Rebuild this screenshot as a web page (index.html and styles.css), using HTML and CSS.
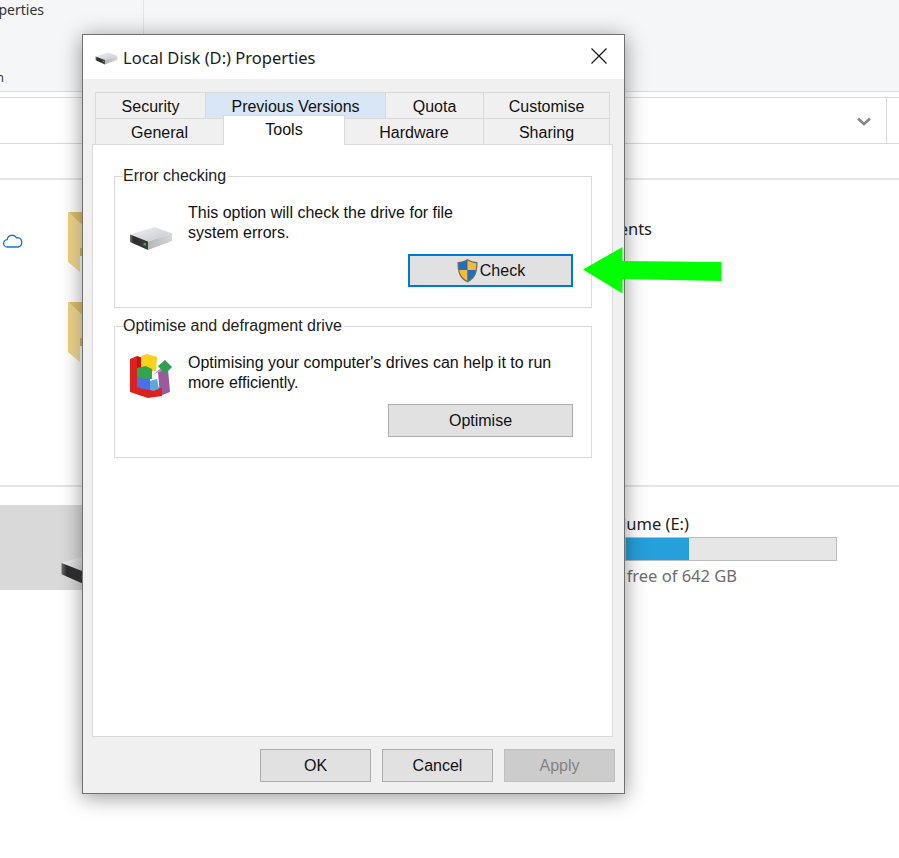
FILE: index.html
```html
<!DOCTYPE html>
<html lang="en">
<head>
<meta charset="utf-8">
<title>Local Disk (D:) Properties</title>
<link rel="stylesheet" href="styles.css">
</head>
<body>
<svg class="defs" width="0" height="0" aria-hidden="true">
  <defs>
    <linearGradient id="driveTop" x1="0" y1="0" x2="1" y2="1">
      <stop offset="0" stop-color="#f2f2f4"/><stop offset="1" stop-color="#c4c6ca"/>
    </linearGradient>
    <linearGradient id="driveFront" x1="0" y1="0" x2="1" y2="0">
      <stop offset="0" stop-color="#6e6e6e"/><stop offset=".2" stop-color="#2c2c2c"/><stop offset="1" stop-color="#3c3c3c"/>
    </linearGradient>
    <linearGradient id="driveSide" x1="0" y1="0" x2="1" y2="0">
      <stop offset="0" stop-color="#b5b6ba"/><stop offset="1" stop-color="#d5d6d9"/>
    </linearGradient>
    <linearGradient id="folderFace" x1="0" y1="0" x2="1" y2="0">
      <stop offset="0" stop-color="#eed180"/><stop offset="1" stop-color="#f8e4a4"/>
    </linearGradient>
    <symbol id="drive" viewBox="0 0 44 25">
      <polygon points="1,8.5 26,1 43,7.5 19,15.5" fill="url(#driveTop)"/>
      <polygon points="1,8.5 19,15.5 19,24 1,16" fill="url(#driveFront)"/>
      <polygon points="19,15.5 43,7.5 43,15 19,24" fill="url(#driveSide)"/>
      <rect x="14.5" y="17" width="2.5" height="2.5" fill="#22c03a"/>
    </symbol>
    <symbol id="folder" viewBox="0 0 14 60">
      <polygon points="0,0 14,0 14,13" fill="#e2c268"/>
      <polygon points="0,0 14,13 14,44 12,44 12,60 0,50" fill="url(#folderFace)"/>
      <rect x="12" y="36" width="2" height="8" fill="#d9b860"/>
    </symbol>
  </defs>
</svg>

<div class="explorer">
  <header class="ribbon">
    <div class="ribbon-group">
      <div class="ribbon-label">Properties</div>
      <div class="ribbon-caption">Open</div>
    </div>
  </header>
  <div class="address">
    <div class="address-field">
      <svg class="chevron" width="14" height="9" viewBox="0 0 14 9"><path d="M1 1.5 7 7l6-5.500" fill="none" stroke="#858585" stroke-width="2.400"/></svg>
    </div>
    <div class="address-end"></div>
  </div>
  <div class="section-head"></div>
  <section class="folders">
    <div class="quick-col">
      <svg class="cloud" width="20" height="15" viewBox="0 0 20 15"><path d="M5 14H4.500a3.700 3.700 0 0 1-.3-7.400A5 5 0 0 1 13.500 4.800a4.500 4.500 0 0 1 .9-.1 4.700 4.700 0 0 1 .6 9.300Z" fill="none" stroke="#0a78d6" stroke-width="1.300"/></svg>
    </div>
    <div class="folder-col">
      <svg class="folder" width="14" height="60"><use href="#folder"/></svg>
      <svg class="folder" width="14" height="60"><use href="#folder"/></svg>
    </div>
    <div class="docs-col">Documents</div>
  </section>
  <div class="section-rule"></div>
  <section class="drives">
    <div class="drive-selected">
      <svg class="drive-large" width="66" height="38"><use href="#drive"/></svg>
    </div>
    <div class="volume">
      <div class="volume-name">New Volume (E:)</div>
      <div class="meter"><div class="meter-fill" style="width:30%"></div></div>
      <div class="volume-free">400 GB free of 642 GB</div>
    </div>
  </section>
</div>

<div class="dialog">
  <div class="titlebar">
    <svg class="title-icon" width="23" height="13"><use href="#drive"/></svg>
    <span class="title-text">Local Disk (D:) Properties</span>
    <svg class="close" width="16" height="16" viewBox="0 0 16 16"><path d="M.5.5l15 15M15.500.5l-15 15" stroke="#111" stroke-width="1.100" fill="none"/></svg>
  </div>
  <div class="dialog-body">
    <div class="tabs">
      <div class="tab-row">
        <div class="tab w-security">Security</div>
        <div class="tab w-previous hot">Previous Versions</div>
        <div class="tab w-quota">Quota</div>
        <div class="tab w-customise">Customise</div>
      </div>
      <div class="tab-row">
        <div class="tab w-general">General</div>
        <div class="tab w-tools active">Tools</div>
        <div class="tab w-hardware">Hardware</div>
        <div class="tab w-sharing">Sharing</div>
      </div>
    </div>
    <div class="panel">
      <div class="group first">
        <span class="legend">Error checking</span>
        <div class="group-row">
          <svg class="group-drive" width="44" height="25"><use href="#drive"/></svg>
          <p class="group-text">This option will check the drive for file<br>system errors.</p>
        </div>
        <div class="group-actions">
          <button class="btn focus" type="button">
            <svg class="shield" width="23" height="25" viewBox="0 0 23 25">
              <path d="M11.500 1C8.500 3 5 4 1.500 4c0 9 1 16 10 20.500C20.500 20 21.500 13 21.500 4 18 4 14.500 3 11.500 1Z" fill="#6e6e6e"/>
              <path d="M11.500 2.500C9 4 6 5 2.800 5.200c0 2.300.1 4.600.5 6.800h8.200Z" fill="#1b6fc4"/>
              <path d="M11.500 2.500C14 4 17 5 20.200 5.200c0 2.300-.1 4.600-.5 6.800h-8.200Z" fill="#fbb92f"/>
              <path d="M3.300 12h8.200v10.900C6 19.800 4.100 16.500 3.300 12Z" fill="#fbb92f"/>
              <path d="M19.700 12h-8.200v10.900c5.500-3.100 7.400-6.400 8.200-10.900Z" fill="#1b6fc4"/>
            </svg><span>Check</span>
          </button>
        </div>
      </div>
      <div class="group">
        <span class="legend">Optimise and defragment drive</span>
        <div class="group-row">
          <svg class="defrag" width="44" height="46" viewBox="129 353 44 46">
            <polygon points="158,372 168,369 170,392 160,396" fill="#9c5a9e"/>
            <polygon points="153,375 158,372 168,369 162,367" fill="#b985b9"/>
            <polygon points="130,359 137,356 142,358 142,386 162,388 162,396 148,398 130,392" fill="#e0201c"/>
            <polygon points="137,356 142,358 142,386 140,386 137,384" fill="#c81410"/>
            <polygon points="141,356 147,354 157,357 156,371 147,372 141,370" fill="#f6d21a"/>
            <polygon points="137,368 146,366 152,369 152,379 143,380 137,377" fill="#2fa84c"/>
            <polygon points="137,376 143,379 150,378 150,390 143,389 137,387" fill="#4a6fe8"/>
            <polygon points="150,381 157,379 159,389 153,391 150,390" fill="#5aa8dc"/>
            <polygon points="158,366 165,360 172,367 165,374" fill="#2f9e52"/>
          </svg>
          <p class="group-text">Optimising your computer's drives can help it to run<br>more efficiently.</p>
        </div>
        <div class="group-actions">
          <button class="btn wide" type="button">Optimise</button>
        </div>
      </div>
    </div>
    <div class="footer">
      <button class="btn small" type="button">OK</button>
      <button class="btn small" type="button">Cancel</button>
      <button class="btn small disabled" type="button">Apply</button>
    </div>
  </div>
</div>

<svg class="arrow" width="140" height="48" viewBox="583 247 140 48"><polygon points="583,269.500 622.500,247 622.500,261 721.500,262 721.500,281 622.500,279 622.500,293.500" fill="#00ff00"/></svg>
</body>
</html>
```
FILE: styles.css
```css
* { box-sizing: border-box; }
html, body { margin: 0; padding: 0; background: #fff; }
body {
  width: 899px;
  height: 858px;
  position: relative;
  overflow: hidden;
  font-family: "Liberation Sans", Arial, sans-serif;
  font-size: 16px;
  color: #111;
}
.defs { position: absolute; }

/* Explorer behind the dialog */
.explorer { height: 858px; font-family: "Noto Sans", "Open Sans", sans-serif; }
.ribbon {
  height: 92px;
  background: #f5f6f8;
  border-bottom: 1px solid #dcdcdc;
  display: flex;
}
.ribbon-group {
  width: 144px;
  border-right: 1px solid #e3e4e6;
  font-size: 14px;
  color: #333;
  position: relative;
  overflow: hidden;
}
.ribbon-label {
  height: 69px;
  width: 44px;
  display: flex;
  justify-content: flex-end;
  white-space: nowrap;
  padding-top: 0;
  line-height: 20px;
}
.ribbon-caption {
  width: 4px;
  display: flex;
  justify-content: flex-end;
  font-size: 12px;
  line-height: 18px;
}
.address {
  margin-top: 5px;
  height: 47px;
  border-top: 1px solid #dcdcdc;
  border-bottom: 1px solid #d9d9d9;
  display: flex;
}
.address-field {
  width: 887px;
  border-right: 1px solid #d9d9d9;
  display: flex;
  align-items: center;
  justify-content: flex-end;
  padding-right: 15px;
}
.chevron { margin-top: 2px; }
.address-end { flex: 1; }
.section-head {
  height: 36px;
  border-bottom: 2px solid #e5e5e5;
}
.folders {
  height: 305px;
  display: flex;
}
.quick-col { width: 68px; padding: 53px 0 0 3px; }
.cloud { display: block; }
.folder-col {
  width: 14px;
  padding-top: 32px;
  display: flex;
  flex-direction: column;
  gap: 30px;
}
.folder { display: block; }
.docs-col {
  margin-left: 480px;
  width: 90px;
  display: flex;
  justify-content: flex-end;
  padding-top: 37px;
  font-size: 16.500px;
  line-height: 24px;
  color: #222;
  white-space: nowrap;
}
.section-rule { height: 2px; background: #e5e5e5; }
.drives {
  display: flex;
  padding-top: 18px;
}
.drive-selected {
  width: 82px;
  height: 85px;
  background: #d9d9d9;
  position: relative;
  overflow: hidden;
  padding: 45px 0 0 60px;
}
.drive-large { display: block; flex: none; }
.volume {
  margin-left: 543px;
  width: 212px;
  position: relative;
}
.volume-name, .volume-free {
  display: flex;
  justify-content: flex-start;
  white-space: nowrap;
  direction: rtl;
  width: 64px;
  font-size: 16.500px;
  line-height: 24px;
  color: #222;
  unicode-bidi: plaintext;
}
.volume-name { margin-top: 7px; height: 24px; direction: ltr; justify-content: flex-end; }
.volume-free { margin-top: 3px; width: 112px; color: #6d6d6d; direction: ltr; justify-content: flex-end; }
.meter {
  margin-top: 1px;
  height: 24px;
  background: #e6e6e6;
  border: 1px solid #bcbcbc;
  display: flex;
}
.meter-fill { background: #26a0da; }

/* Dialog */
.dialog {
  position: absolute;
  left: 82px;
  top: 34px;
  width: 543px;
  height: 760px;
  background: #f0f0f0;
  border: 1px solid #707070;
  box-shadow: 0 3px 20px rgba(0, 0, 0, .42);
  display: flex;
  flex-direction: column;
}
.titlebar {
  height: 44px;
  flex: none;
  background: #fff;
  display: flex;
  align-items: center;
  padding: 0 17px 0 12px;
}
.title-icon { margin-top: 3px; }
.title-text {
  margin-left: 5px;
  flex: 1;
  font-family: "Noto Sans", "Open Sans", sans-serif;
  font-size: 16.500px;
  color: #1a1a1a;
}
.close { margin-top: -2px; }
.dialog-body {
  flex: 1;
  display: flex;
  flex-direction: column;
  padding-top: 13px;
}
.tabs { margin-left: 12px; }
.tab-row { display: flex; height: 26px; }
.tab {
  border: 1px solid #d9d9d9;
  border-right-width: 0;
  border-bottom-width: 0;
  background: #f0f0f0;
  text-align: center;
  line-height: 28px;
  height: 26px;
  overflow: hidden;
  color: #111;
}
.tab:last-child { border-right-width: 1px; }
.hot { background: #d8e6f5; }
.w-security { width: 110px; }
.w-previous { width: 180px; }
.w-quota { width: 98px; }
.w-customise { width: 127px; }
.w-general { width: 128px; }
.w-tools { width: 122px; }
.w-hardware { width: 138px; }
.w-sharing { width: 127px; }
.active {
  position: relative;
  z-index: 2;
  height: 30px;
  margin-top: -3px;
  background: #fff;
  border-right-width: 1px;
  border-bottom: 0;
  line-height: 27px;
}
.active + .tab { border-left-width: 0; }
.panel {
  margin-left: 9px;
  width: 521px;
  height: 593px;
  flex: none;
  background: #fff;
  border: 1px solid #d9d9d9;
  padding: 31px 20px 0 21px;
  display: flex;
  flex-direction: column;
  gap: 18px;
}
.group {
  position: relative;
  height: 132px;
  border: 1px solid #d9d9d9;
  padding: 26px 18px 0 14px;
}
.group.first { height: 132px; }
.legend {
  position: absolute;
  left: 8px;
  top: -10px;
  background: #fff;
  line-height: 18px;
  padding-right: 2px;
  color: #222;
}
.group-row { display: flex; gap: 15px; height: 40px; }
.group-drive { margin-top: 23px; flex: none; }
.defrag { margin-top: 0; flex: none; }
.group-text { margin: 0; line-height: 20px; }
.group-actions { margin-top: 11px; display: flex; justify-content: flex-end; }
.btn {
  height: 33px;
  padding: 0;
  border: 1px solid #adadad;
  background: #e1e1e1;
  font: inherit;
  color: #111;
  display: flex;
  align-items: center;
  justify-content: center;
}
.focus { width: 165px; border: 2px solid #0078d7; }
.shield { margin: 0 1px 0 0; }
.wide { width: 185px; }
.footer {
  display: flex;
  justify-content: flex-end;
  gap: 11px;
  margin-top: 12px;
  padding-right: 9px;
}
.small { width: 111px; }
.disabled { background: #ccc; border-color: #bfbfbf; color: #838383; }
.arrow { position: absolute; left: 583px; top: 247px; z-index: 5; }
```
